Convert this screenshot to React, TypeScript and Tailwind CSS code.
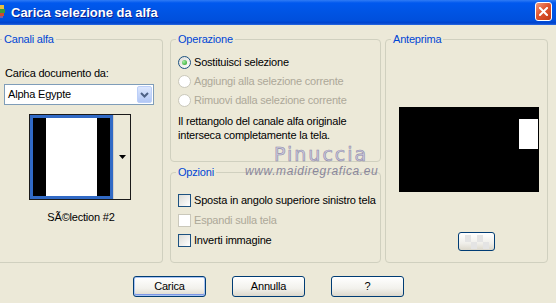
import React from "react";

function Radio({ checked, disabled }: { checked?: boolean; disabled?: boolean }) {
  return (
    <span
      className={`flex h-[13px] w-[13px] shrink-0 items-center justify-center rounded-full border ${
        disabled
          ? "border-[#CAC8BB] bg-white"
          : "border-[#1C5180] bg-[linear-gradient(135deg,#DCDCD7,#FFFFFF)]"
      }`}
    >
      {checked && (
        <span className="h-[5px] w-[5px] rounded-full bg-[radial-gradient(circle_at_35%_35%,#A4F0A4,#1E9A1E)]" />
      )}
    </span>
  );
}

function Check({ disabled }: { disabled?: boolean }) {
  return (
    <span
      className={`h-[13px] w-[13px] shrink-0 border ${
        disabled
          ? "border-[#CAC8BB] bg-white"
          : "border-[#1C5180] bg-[linear-gradient(135deg,#DCDCD7,#FFFFFF)]"
      }`}
    />
  );
}

function XpButton({ label, isDefault }: { label: string; isDefault?: boolean }) {
  return (
    <button
      className={`flex h-[21px] w-[73px] items-center justify-center rounded-[3px] border border-[#003C74] bg-[linear-gradient(#FFFFFF,#F2F1EC_60%,#DCD8CC)] text-[11px] leading-[13px] tracking-[-0.2px] text-black ${
        isDefault ? "shadow-[inset_0_0_0_1px_#A9C4F2,inset_0_-1px_0_1px_#7C96E6]" : ""
      }`}
    >
      {label}
    </button>
  );
}

export default function App() {
  return (
    <div className="relative h-[303px] w-[556px] overflow-hidden bg-[#ECE9D8] font-['Liberation_Sans',Arial,sans-serif] text-[11px] leading-[13px] tracking-[-0.2px] text-black">
      {/* Title bar */}
      <div className="flex h-[25px] bg-[linear-gradient(to_bottom,#2F7BF5_0%,#0058EE_12%,#0054E3_50%,#004FDC_82%,#0043CC_92%,#2B6BE2_100%)]">
        <svg width="6" height="14" viewBox="0 0 6 14" className="mt-[5px]">
          <rect x="0" y="0" width="4" height="4" fill="#E8C040" />
          <rect x="0" y="4" width="5" height="4" fill="#3C9A3C" />
          <rect x="0" y="8" width="4" height="3" fill="#D04A2A" />
          <rect x="0" y="11" width="3" height="2" fill="#7A5CA8" />
        </svg>
        <span className="ml-[5px] mt-[5px] text-[13px] font-bold leading-[15px] tracking-normal text-white [text-shadow:1px_1px_0_#0A1E8C]">
          Carica selezione da alfa
        </span>
        <div className="ml-auto mr-[4px] mt-[2px] flex h-[19px] w-[17px] items-center justify-center rounded-[3px] border border-white bg-[linear-gradient(135deg,#F39A7E,#E0552F_45%,#C23A14)]">
          <svg width="9" height="9" viewBox="0 0 9 9">
            <path d="M1 1 L8 8 M8 1 L1 8" stroke="white" strokeWidth="2" strokeLinecap="square" />
          </svg>
        </div>
      </div>

      {/* Group boxes */}
      <div className="flex pt-[8px]">
        <fieldset className="h-[230px] w-[163px] rounded-r-[4px] border border-l-0 border-[#D0D0BF]">
          <legend className="ml-[2px] px-[2px] text-[#0046D5]">Canali alfa</legend>
          <div className="mt-[21px] pl-[5px]">Carica documento da:</div>
          <div className="ml-[4px] mt-[4px] flex h-[21px] w-[150px] items-center border border-[#7F9DB9] bg-white">
            <span className="flex-1 pl-[3px]">Alpha Egypte</span>
            <span className="mr-[1px] flex h-[17px] w-[15px] items-center justify-center rounded-[2px] border border-[#BCCFF8] bg-[linear-gradient(#DCE7FE,#B2C7F5)]">
              <svg width="9" height="6" viewBox="0 0 9 6">
                <path d="M1 1 L4.5 4.5 L8 1" fill="none" stroke="#4D6185" strokeWidth="2" />
              </svg>
            </span>
          </div>
          <div className="ml-[29px] mt-[9px] flex h-[86px] w-[102px] border border-[#1A1A1A]">
            <div className="flex w-[83px] border-[3px] border-[#316AC5]">
              <div className="w-[13px] bg-black" />
              <div className="w-[51px] bg-white" />
              <div className="flex-1 bg-black" />
            </div>
            <div className="flex flex-1 items-center justify-center border-l border-[#D4D0C8] bg-[#ECE9D8]">
              <svg width="7" height="4" viewBox="0 0 7 4">
                <path d="M0 0 H7 L3.5 4 Z" fill="black" />
              </svg>
            </div>
          </div>
          <div className="mt-[11px] text-center">SÃ©lection #2</div>
        </fieldset>

        <div className="ml-[7px] flex w-[211px] flex-col gap-[4px]">
          <fieldset className="h-[129px] rounded-[4px] border border-[#D0D0BF]">
            <legend className="ml-[5px] px-[2px] text-[#0046D5]">Operazione</legend>
            <div className="mt-[7px] flex h-[19px] items-center pl-[7px]">
              <Radio checked />
              <span className="ml-[3px]">Sostituisci selezione</span>
            </div>
            <div className="flex h-[19px] items-center pl-[7px] text-[#ACA899]">
              <Radio disabled />
              <span className="ml-[3px]">Aggiungi alla selezione corrente</span>
            </div>
            <div className="flex h-[19px] items-center pl-[7px] text-[#ACA899]">
              <Radio disabled />
              <span className="ml-[3px]">Rimuovi dalla selezione corrente</span>
            </div>
            <p className="mt-[4px] pl-[7px] leading-[14px]">
              Il rettangolo del canale alfa originale
              <br />
              interseca completamente la tela.
            </p>
          </fieldset>

          <fieldset className="h-[97px] rounded-[4px] border border-[#D0D0BF]">
            <legend className="ml-[5px] px-[2px] text-[#0046D5]">Opzioni</legend>
            <div className="mt-[11px] flex h-[20px] items-center pl-[7px]">
              <Check />
              <span className="ml-[3px]">Sposta in angolo superiore sinistro tela</span>
            </div>
            <div className="flex h-[20px] items-center pl-[7px] text-[#ACA899]">
              <Check disabled />
              <span className="ml-[3px]">Espandi sulla tela</span>
            </div>
            <div className="flex h-[21px] items-center pl-[7px]">
              <Check />
              <span className="ml-[3px]">Inverti immagine</span>
            </div>
          </fieldset>
        </div>

        <fieldset className="ml-[4px] h-[230px] w-[163px] rounded-[4px] border border-[#D0D0BF]">
          <legend className="ml-[5px] px-[2px] text-[#0046D5]">Anteprima</legend>
          <div className="ml-[13px] mt-[61px] flex h-[85px] w-[140px] justify-end bg-black pr-[1px] pt-[12px]">
            <div className="h-[30px] w-[19px] bg-white" />
          </div>
          <div className="ml-[72px] mt-[40px] flex h-[19px] w-[37px] items-center justify-center rounded-[3px] border border-[#003C74] bg-[linear-gradient(#FFFFFF,#F0EFEA_60%,#DCD8CC)]">
            <svg width="24" height="14" viewBox="0 0 24 14">
              <rect x="0" y="0" width="6" height="7" fill="#E4E4E4" />
              <rect x="12" y="0" width="6" height="7" fill="#E4E4E4" />
              <rect x="6" y="7" width="6" height="7" fill="#E4E4E4" />
              <rect x="18" y="7" width="6" height="7" fill="#E4E4E4" />
            </svg>
          </div>
        </fieldset>
      </div>

      {/* Buttons */}
      <div className="mt-[13px] flex gap-[26px] pl-[133px]">
        <XpButton label="Carica" isDefault />
        <XpButton label="Annulla" />
        <XpButton label="?" />
      </div>

      {/* Watermark */}
      <div className="pointer-events-none absolute left-[274px] top-[145px] font-['DejaVu_Sans',sans-serif] text-[19px] leading-[19px] tracking-[2px] text-[#CFCCDF] [-webkit-text-stroke:0.6px_#8E8AAA]">
        Pinuccia
      </div>
      <div className="pointer-events-none absolute left-[245px] top-[165px] text-[12px] italic leading-[12px] tracking-[0.6px] text-[#8A879C]">
        www.maidiregrafica.eu
      </div>
    </div>
  );
}
